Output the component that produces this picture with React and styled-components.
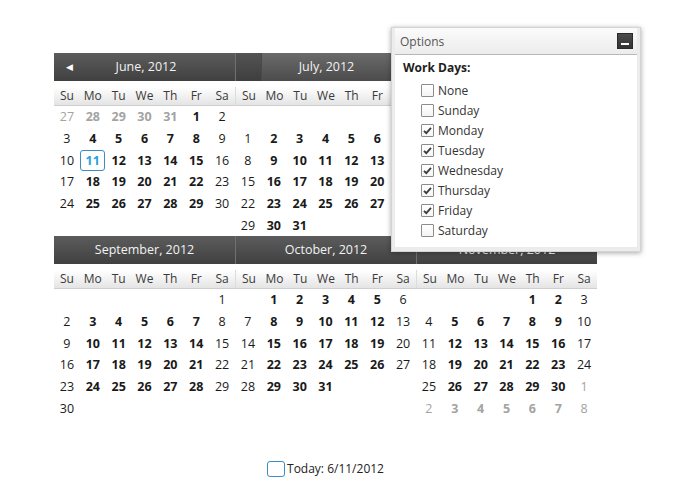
import React from "react";
import styled, { createGlobalStyle } from "styled-components";

const GlobalStyle = createGlobalStyle`
  html, body { margin: 0; padding: 0; background: #fff; }
  body { font-family: "Open Sans", "Noto Sans", sans-serif; }
`;

const Page = styled.div`
  position: relative;
  width: 700px;
  height: 500px;
  box-sizing: border-box;
  padding: 53px 0 0 54px;
  background: #fff;
`;

const CalendarArea = styled.div`
  display: flex;
  flex-direction: column;
  width: 543px;
`;

const MonthGrid = styled.div`
  display: grid;
  grid-template-columns: repeat(3, 181px);
`;

const Month = styled.div`
  display: flex;
  flex-direction: column;
  height: 183px;
  visibility: ${(p) => (p.$covered ? "hidden" : "visible")};
`;

const Header = styled.div`
  display: flex;
  height: 28px;
  background: linear-gradient(#5c5c5c, #404040);
  border-left: ${(p) => (p.$first ? "none" : "1px solid #707070")};
  color: #f2f2f2;
  font-size: 12.5px;
  box-sizing: border-box;
`;

const NavSlot = styled.div`
  width: 25px;
  display: flex;
  align-items: center;
  justify-content: center;
  font-size: 9px;
  color: #fff;
  padding-left: ${(p) => (p.$arrow ? "3px" : "0")};
  background: ${(p) => (p.$dim ? "linear-gradient(#545454, #3e3e3e)" : "transparent")};
  border-right: ${(p) => (p.$dim ? "1px solid #4a4a4a" : "none")};
`;

const Title = styled.div`
  flex: 1;
  display: flex;
  align-items: center;
  justify-content: center;
  background: ${(p) => (p.$hot ? "linear-gradient(#6a6a6a, #4c4c4c)" : "transparent")};
  padding-right: ${(p) => (p.$pad ? "25px" : "0")};
`;

const DayNames = styled.div`
  display: grid;
  grid-template-columns: repeat(7, 1fr);
  height: 19px;
  margin-top: 6px;
  background: linear-gradient(#ffffff, #e4e4e4);
  border-bottom: 1px solid #cfcfcf;
  border-left: ${(p) => (p.$first ? "none" : "1px solid #dcdcdc")};
  box-sizing: border-box;
`;

const DayName = styled.div`
  display: flex;
  align-items: center;
  justify-content: center;
  font-size: 12px;
  color: #3a3a3a;
`;

const Dates = styled.div`
  display: grid;
  grid-template-columns: repeat(7, 1fr);
  grid-auto-rows: 21.7px;
`;

const DateCell = styled.div`
  display: flex;
  align-items: center;
  justify-content: center;
  font-size: 12.5px;
  font-weight: ${(p) => (p.$bold ? 700 : 400)};
  color: ${(p) => (p.$today ? "#2aa0e0" : p.$other ? "#a3a3a3" : "#1a1a1a")};
`;

const TodayMark = styled.span`
  display: flex;
  align-items: center;
  justify-content: center;
  width: 25px;
  height: 21px;
  box-sizing: border-box;
  border: 1px solid #3b8dc4;
  border-radius: 3px;
`;

const Footer = styled.div`
  display: flex;
  align-items: center;
  justify-content: center;
  margin-top: 41px;
  font-size: 12px;
  color: #222;
`;

const TodayBox = styled.span`
  width: 18px;
  height: 16px;
  box-sizing: border-box;
  border: 1px solid #3b8dc4;
  border-radius: 3px;
  margin-right: 2px;
`;

const Panel = styled.div`
  position: absolute;
  left: 391px;
  top: 27px;
  width: 250px;
  height: 225px;
  box-sizing: border-box;
  background: #ececec;
  border: 1px solid #d4d4d4;
  padding: 0 3px 4px 3px;
  box-shadow: 0 1px 5px rgba(0, 0, 0, 0.35);
  display: flex;
  flex-direction: column;
`;

const PanelTitleBar = styled.div`
  display: flex;
  align-items: center;
  justify-content: space-between;
  height: 26px;
  padding: 0 4px 0 5px;
  background: linear-gradient(#fbfbfb, #ececec);
  border-bottom: 1px solid #b8b8b8;
  font-size: 12px;
  color: #555;
`;

const MinButton = styled.div`
  width: 16px;
  height: 16px;
  box-sizing: border-box;
  background: linear-gradient(#4c4c4c, #333);
  border: 1px solid #2a2a2a;
  display: flex;
  align-items: flex-end;
  justify-content: center;
  padding-bottom: 3px;
  &::after {
    content: "";
    width: 8px;
    height: 2px;
    background: #fff;
  }
`;

const PanelBody = styled.div`
  flex: 1;
  background: #fff;
  padding: 4px 0 0 8px;
  display: flex;
  flex-direction: column;
`;

const SectionLabel = styled.div`
  font-size: 12px;
  font-weight: 700;
  color: #1e1e1e;
  height: 18px;
  line-height: 18px;
  margin-bottom: 3px;
`;

const OptionRow = styled.label`
  display: flex;
  align-items: center;
  height: 20px;
  padding-left: 18px;
  font-size: 12px;
  color: #333;
`;

const Box = styled.span`
  width: 13px;
  height: 13px;
  box-sizing: border-box;
  border: 1px solid #8c8c8c;
  border-radius: 1px;
  background: linear-gradient(#fff, #f4f4f4);
  margin-right: 4px;
  display: flex;
  align-items: center;
  justify-content: center;
`;

const Check = () => (
  <svg width="11" height="11" viewBox="0 0 11 11">
    <path d="M2 5.8 L4.3 8.2 L9 2.8" fill="none" stroke="#3a3a3a" strokeWidth="1.8" />
  </svg>
);

const DAY_NAMES = ["Su", "Mo", "Tu", "We", "Th", "Fr", "Sa"];

const MONTHS = [
  { name: "June", m: 5, prev: true },
  { name: "July", m: 6, hot: true },
  { name: "August", m: 7, next: true, covered: true },
  { name: "September", m: 8 },
  { name: "October", m: 9 },
  { name: "November", m: 10, nextDays: true },
];

function buildCells(m, showPrev, showNext) {
  const year = 2012;
  let offset = new Date(year, m, 1).getDay();
  if (offset === 0) offset = 7;
  const dim = new Date(year, m + 1, 0).getDate();
  const prevDim = new Date(year, m, 0).getDate();
  const cells = [];
  for (let i = 0; i < 42; i++) {
    const col = i % 7;
    const bold = col !== 0 && col !== 6;
    const d = i - offset + 1;
    if (d < 1) {
      cells.push(showPrev ? { label: prevDim + d, other: true, bold } : { label: "" });
    } else if (d > dim) {
      cells.push(showNext ? { label: d - dim, other: true, bold } : { label: "" });
    } else {
      cells.push({ label: d, bold, today: m === 5 && d === 11 });
    }
  }
  return cells;
}

const MonthView = ({ month, index }) => {
  const cells = buildCells(month.m, month.prev, month.nextDays);
  const first = index % 3 === 0;
  return (
    <Month $covered={month.covered}>
      <Header $first={first}>
        {month.prev ? <NavSlot $arrow>◀</NavSlot> : <NavSlot $dim={month.hot} />}
        <Title $hot={month.hot} $pad={!month.next}>
          {month.name}, 2012
        </Title>
        {month.next && <NavSlot>▶</NavSlot>}
      </Header>
      <DayNames $first={first}>
        {DAY_NAMES.map((d) => (
          <DayName key={d}>{d}</DayName>
        ))}
      </DayNames>
      <Dates>
        {cells.map((c, i) => (
          <DateCell key={i} $bold={c.bold} $other={c.other} $today={c.today}>
            {c.today ? <TodayMark>{c.label}</TodayMark> : c.label}
          </DateCell>
        ))}
      </Dates>
    </Month>
  );
};

const OPTIONS = [
  ["None", false],
  ["Sunday", false],
  ["Monday", true],
  ["Tuesday", true],
  ["Wednesday", true],
  ["Thursday", true],
  ["Friday", true],
  ["Saturday", false],
];

export default function App() {
  return (
    <Page>
      <GlobalStyle />
      <CalendarArea>
        <MonthGrid>
          {MONTHS.map((m, i) => (
            <MonthView key={m.name} month={m} index={i} />
          ))}
        </MonthGrid>
        <Footer>
          <TodayBox />
          Today: 6/11/2012
        </Footer>
      </CalendarArea>
      <Panel>
        <PanelTitleBar>
          Options
          <MinButton />
        </PanelTitleBar>
        <PanelBody>
          <SectionLabel>Work Days:</SectionLabel>
          {OPTIONS.map(([label, on]) => (
            <OptionRow key={label}>
              <Box>{on && <Check />}</Box>
              {label}
            </OptionRow>
          ))}
        </PanelBody>
      </Panel>
    </Page>
  );
}
